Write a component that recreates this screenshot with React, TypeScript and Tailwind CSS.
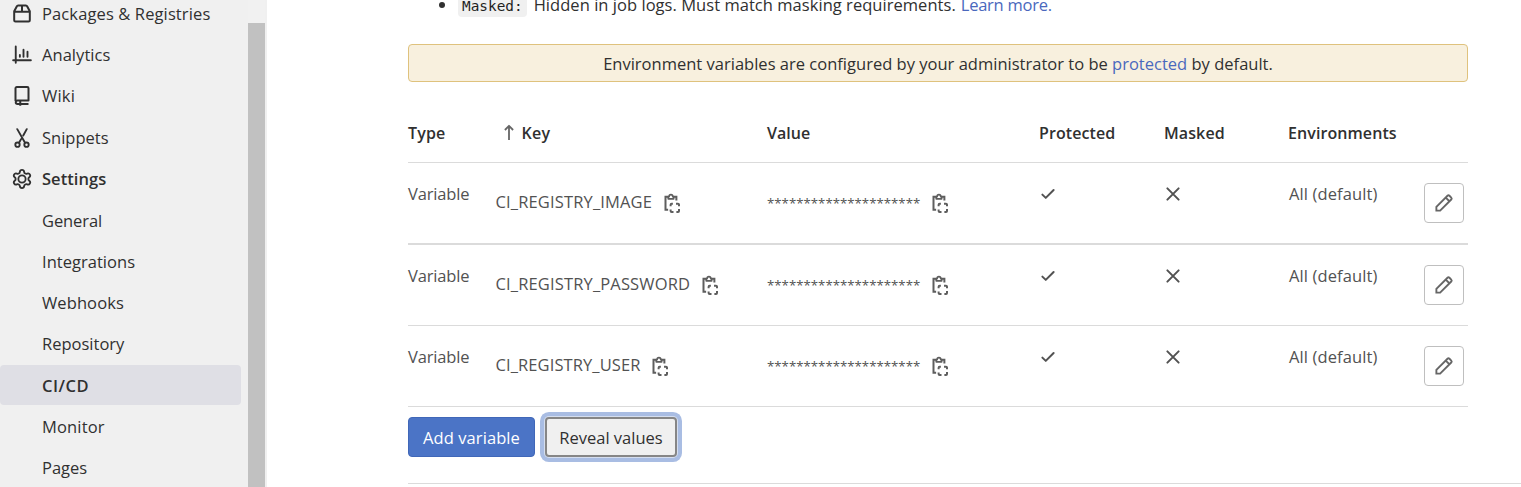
import type { ReactNode } from "react";

function Icon({ children, className = "size-5" }: { children: ReactNode; className?: string }) {
  return (
    <svg viewBox="0 0 16 16" className={`${className} shrink-0`} fill="none" stroke="currentColor" strokeWidth="1.5" strokeLinecap="round" strokeLinejoin="round">
      {children}
    </svg>
  );
}

const PackageIcon = () => (
  <Icon>
    <path d="M1.75 5.8 3.9 1.8a1.2 1.2 0 0 1 1-.65h6.2a1.2 1.2 0 0 1 1 .65l2.15 4v7.2a1 1 0 0 1-1 1H2.75a1 1 0 0 1-1-1zM1.75 6.1h12.5M8 1.2v4.9" strokeWidth="1.6" />
  </Icon>
);
const ChartIcon = () => (
  <Icon>
    <path d="M3 1.2v13M.9 12.2h14.2M6.3 7.9v1.5M9.2 3.7v5.7M12.4 5.3v4.1" />
  </Icon>
);
const BookIcon = () => (
  <Icon>
    <path d="M2.8 12V1.8a1 1 0 0 1 1-1h8.4a1 1 0 0 1 1 1v9.8H4.4a1.4 1.4 0 0 0 0 2.8h8.8M6.6 11.8v4" strokeLinecap="butt" strokeWidth="1.6" />
  </Icon>
);
const ScissorsIcon = () => (
  <Icon>
    <path d="m4.2.9 6.1 10.7M11.8.9 9 6M7.4 8.7l-1.7 2.9" />
    <circle cx="4.4" cy="13.3" r="1.75" />
    <circle cx="11.6" cy="13.3" r="1.75" />
  </Icon>
);
const GearIcon = () => (
  <svg viewBox="1 1 22 22" className="size-5 shrink-0" fill="none" stroke="currentColor" strokeWidth="2" strokeLinejoin="round">
    <path d="M9.671 4.136a2.34 2.34 0 0 1 4.659 0 2.34 2.34 0 0 0 3.319 1.915 2.34 2.34 0 0 1 2.33 4.033 2.34 2.34 0 0 0 0 3.831 2.34 2.34 0 0 1-2.33 4.033 2.34 2.34 0 0 0-3.319 1.915 2.34 2.34 0 0 1-4.659 0 2.34 2.34 0 0 0-3.32-1.915 2.34 2.34 0 0 1-2.33-4.033 2.34 2.34 0 0 0 0-3.831A2.34 2.34 0 0 1 6.35 6.051a2.34 2.34 0 0 0 3.319-1.915" />
    <circle cx="12" cy="12" r="4" />
  </svg>
);
const CopyIcon = () => (
  <Icon>
    <path d="M4.9 13.3H2.8V3h2.1M9.3 3h2.2v3" strokeLinejoin="miter" strokeLinecap="butt" strokeWidth="1.6" />
    <path d="M5 4.6V2.8h.7a1.45 1.45 0 0 1 2.9 0h.7v1.8z" strokeWidth="1.4" />
    <path d="M6.9 10.6V9.4a.8.8 0 0 1 .8-.8h1M11.2 8.6h1.6a.8.8 0 0 1 .8.8v1.2M13.6 12.8v1.6a.8.8 0 0 1-.8.8h-1.3M9.2 15.2H7.7a.8.8 0 0 1-.8-.8v-1.3" strokeLinecap="butt" strokeWidth="1.6" />
  </Icon>
);
const PencilIcon = () => (
  <Icon>
    <path d="M1.9 14.1v-3l8.9-8.9a1.1 1.1 0 0 1 1.55 0l1.45 1.45a1.1 1.1 0 0 1 0 1.55l-8.9 8.9zM9.4 3.7l2.9 2.9" strokeLinejoin="miter" />
  </Icon>
);
const CheckIcon = () => (
  <Icon>
    <path d="m3.5 8.5 2.7 2.6 6.3-6.3" strokeWidth="1.6" />
  </Icon>
);
const CrossIcon = () => (
  <Icon>
    <path d="m3.5 3.5 9 9M12.5 3.5l-9 9" strokeWidth="1.6" />
  </Icon>
);

const mainNav: { label: string; icon: ReactNode; cls?: string }[] = [
  { label: "Packages & Registries", icon: <PackageIcon />, cls: "tracking-[0.12px]" },
  { label: "Analytics", icon: <ChartIcon />, cls: "tracking-[0.05px]" },
  { label: "Wiki", icon: <BookIcon />, cls: "tracking-[0.2px]" },
  { label: "Snippets", icon: <ScissorsIcon /> },
  { label: "Settings", icon: <GearIcon />, cls: "font-semibold tracking-[0.05px]" },
];

const subNav: { label: string; cls?: string }[] = [
  { label: "General", cls: "tracking-[-0.1px]" },
  { label: "Integrations", cls: "tracking-[0.03px]" },
  { label: "Webhooks", cls: "tracking-[0.1px]" },
  { label: "Repository" },
  { label: "CI/CD", cls: "bg-[#dfdfe5] font-semibold tracking-[0.55px]" },
  { label: "Monitor", cls: "tracking-[0.15px]" },
  { label: "Pages" },
];

const variables = [
  { name: "CI_REGISTRY_IMAGE", row: "h-[82px] border-b-2", cls: "tracking-[0.15px]" },
  { name: "CI_REGISTRY_PASSWORD", row: "h-[81px] border-b", cls: "tracking-[0.15px]" },
  { name: "CI_REGISTRY_USER", row: "h-[81px] border-b", cls: "tracking-[0.1px]" },
];

const columns = "grid grid-cols-[87.5px_271.5px_272px_125px_124px_136px_44px]";

export default function App() {
  return (
    <div className="flex h-[487px] w-full overflow-hidden bg-white font-['Open_Sans',sans-serif] text-[16.5px] leading-6 text-[#303030]">
      <aside className="flex w-[267px] shrink-0 bg-[#f0f0f0]">
        <nav className="-mt-[6.25px] flex w-[248px] flex-col gap-[1.25px] pr-[7px]">
          {mainNav.map((item) => (
            <a key={item.label} className={`flex h-10 shrink-0 items-center gap-2.5 pl-3 ${item.cls ?? ""}`}>
              {item.icon}
              {item.label}
            </a>
          ))}
          {subNav.map((item) => (
            <a key={item.label} className={`flex h-10 shrink-0 items-center rounded pl-[42px] pt-px ${item.cls ?? ""}`}>
              {item.label}
            </a>
          ))}
        </nav>
        <div className="w-[17px] bg-[#f1f1f1] pt-[23px]">
          <div className="h-full bg-[#c1c1c1]" />
        </div>
      </aside>

      <main className="flex min-w-0 flex-1 flex-col pl-[141px]">
        <div className="-mt-[7px] flex h-6 shrink-0 items-center whitespace-pre pl-[31px]">
          <span className="mr-[13px] size-1.5 rounded-full bg-[#303030]" />
          <code className="mr-[7px] h-[23px] rounded bg-[#f0f0f0] px-1 pt-px font-['DejaVu_Sans_Mono',monospace] text-[14.4px] leading-[23px] text-[#1f1f1f]">Masked:</code>
          <span className="tracking-[0.04px]">Hidden in job logs. Must match masking requirements.</span>
          <a className="ml-[5px] tracking-[-0.25px] text-[#4a68bd]">Learn more.</a>
        </div>

        <div className="mt-[27px] flex h-[38px] w-[1060px] shrink-0 items-center justify-center rounded border border-[#dfc27d] bg-[#f8f0de] pt-px">
          <p className="tracking-[0.01px]">
            Environment variables are configured by your administrator to be <a className="text-[#4a68bd]">protected</a> by default.
          </p>
        </div>

        <div className={`${columns} mt-[21px] h-[60px] w-[1060px] shrink-0 items-center border-b border-[#dbdbdb] text-base font-semibold`}>
          <span className="tracking-[0.15px]">Type</span>
          <span className="flex items-center pl-[7px] tracking-[0.3px]">
            <svg viewBox="0 0 12 18" className="mr-[7px] h-[18px] w-3 text-[#666]" fill="none" stroke="currentColor" strokeWidth="1.8">
              <path d="M6 16V1.8M1.9 6 6 1.8 10.1 6" strokeLinejoin="round" />
            </svg>
            Key
          </span>
          <span>Value</span>
          <span className="tracking-[0.08px]">Protected</span>
          <span className="tracking-[0.1px]">Masked</span>
          <span className="tracking-[0.08px]">Environments</span>
        </div>

        {variables.map((v) => (
          <div key={v.name} className={`${columns} ${v.row} w-[1060px] shrink-0 items-start border-[#dbdbdb] pt-[19px] text-[#525252]`}>
            <span className="tracking-[-0.15px]">Variable</span>
            <span className="flex items-start pt-2">
              <span className={v.cls}>{v.name}</span>
              <span className="ml-2.5 pt-[3px] text-[#5e5e5e]"><CopyIcon /></span>
            </span>
            <span className="flex items-start pt-2">
              <span className="w-[163px] pt-px text-[13.25px]">*********************</span>
              <span className="pt-[3px] text-[#5e5e5e]"><CopyIcon /></span>
            </span>
            <span className="-ml-px pt-0.5"><CheckIcon /></span>
            <span className="-ml-px pt-0.5"><CrossIcon /></span>
            <span className="pl-px tracking-[0.12px]">All (default)</span>
            <button className="mt-px flex size-10 items-center justify-center rounded border border-[#bfbfbf] text-[#666]">
              <PencilIcon />
            </button>
          </div>
        ))}

        <div className="flex shrink-0 gap-2.5 pt-2.5">
          <button className="h-10 w-[127px] rounded border border-[#4067b8] bg-[#4b74c6] pt-px tracking-[0.08px] text-white">Add variable</button>
          <button className="h-10 w-[132px] rounded border-2 border-[#868686] bg-[#f0f0f0] pt-px shadow-[0_0_0_1px_#d5deef,0_0_0_5px_#a9bde3]">Reveal values</button>
        </div>
        <div className="mt-[26px] h-px shrink-0 bg-[#dbdbdb]" />
      </main>
    </div>
  );
}
